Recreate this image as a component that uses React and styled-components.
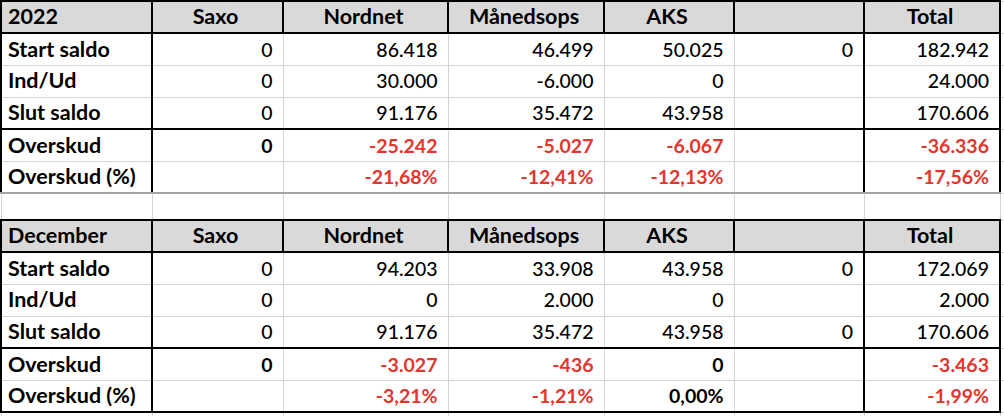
import React from "react";
import styled, { createGlobalStyle } from "styled-components";

const GlobalStyle = createGlobalStyle`
  html, body {
    margin: 0;
    padding: 0;
    background: #ffffff;
  }
  body {
    font-family: Lato, "Liberation Sans", sans-serif;
  }
`;

const Page = styled.div`
  width: 1004px;
  height: 416px;
  overflow: hidden;
  background: #ffffff;
`;

const Sheet = styled.table`
  border-collapse: collapse;
  table-layout: fixed;
  width: 1004px;
  color: #000000;
`;

const Row = styled.tr`
  height: ${(p) => p.$height || 32}px;
`;

const GRID = "1px solid #d4d4d4";
const THICK = "2px solid #000000";

const Cell = styled.td`
  padding: 0 10px 0 6px;
  border: ${GRID};
  white-space: nowrap;
  overflow: hidden;
  vertical-align: middle;
  line-height: 1;
  font-size: ${(p) => (p.$text ? "21.5px" : "19.5px")};
  text-align: ${(p) => p.$align || "right"};
  font-weight: ${(p) => (p.$bold ? 700 : 500)};
  color: ${(p) => (p.$red ? "#e3362c" : "#000000")};
  background: ${(p) => (p.$head ? "#d9d9d9" : "transparent")};
  ${(p) => p.$head && `border: ${THICK};`}
  ${(p) => p.$thickLeft && `border-left: ${THICK};`}
  ${(p) => p.$thickRight && `border-right: ${THICK};`}
  ${(p) => p.$thickTop && `border-top: ${THICK};`}
  ${(p) => p.$bottom && `border-bottom: 2px solid ${p.$bottom};`}
`;

const widths = [151, 131, 165, 156, 130, 130, 136, 5];

const tables = [
  {
    title: "2022",
    bottom: "#a3a3a3",
    rows: [
      ["Start saldo", "0", "86.418", "46.499", "50.025", "0", "182.942"],
      ["Ind/Ud", "0", "30.000", "-6.000", "0", "", "24.000"],
      ["Slut saldo", "0", "91.176", "35.472", "43.958", "", "170.606"],
      ["Overskud", "0", "-25.242", "-5.027", "-6.067", "", "-36.336"],
      ["Overskud (%)", "", "-21,68%", "-12,41%", "-12,13%", "", "-17,56%"],
    ],
  },
  {
    title: "December",
    bottom: "#000000",
    rows: [
      ["Start saldo", "0", "94.203", "33.908", "43.958", "0", "172.069"],
      ["Ind/Ud", "0", "0", "2.000", "0", "", "2.000"],
      ["Slut saldo", "0", "91.176", "35.472", "43.958", "0", "170.606"],
      ["Overskud", "0", "-3.027", "-436", "0", "", "-3.463"],
      ["Overskud (%)", "", "-3,21%", "-1,21%", "0,00%", "", "-1,99%"],
    ],
  },
];

const headers = ["Saxo", "Nordnet", "Månedsops", "AKS", "", "Total"];

const EmptyRow = ({ height }) => (
  <Row $height={height}>
    {widths.map((_, i) => (
      <Cell key={i} />
    ))}
  </Row>
);

const Block = ({ table }) => {
  const header = (
    <Row>
      <Cell $head $bold $text $align="left">
        {table.title}
      </Cell>
      {headers.map((h, i) => (
        <Cell key={i} $head $bold $text $align="center">
          {h}
        </Cell>
      ))}
      <Cell />
    </Row>
  );

  const body = table.rows.map((row, r) => {
    const summary = r >= 3;
    const last = r === table.rows.length - 1;
    return (
      <Row key={r}>
        {row.map((v, c) => (
          <Cell
            key={c}
            $text={c === 0}
            $align={c === 0 ? "left" : "right"}
            $bold={c === 0 || summary}
            $red={summary && v.startsWith("-")}
            $thickLeft={c === 0 || c === 1 || c === 6}
            $thickRight={c === 0 || c === 5 || c === 6}
            $thickTop={r === 3}
            $bottom={last ? table.bottom : null}
          >
            {v}
          </Cell>
        ))}
        <Cell />
      </Row>
    );
  });

  return (
    <>
      {header}
      {body}
    </>
  );
};

export default function App() {
  return (
    <Page>
      <GlobalStyle />
      <Sheet>
        <colgroup>
          {widths.map((w, i) => (
            <col key={i} style={{ width: w }} />
          ))}
        </colgroup>
        <tbody>
          <Block table={tables[0]} />
          <EmptyRow height={27} />
          <Block table={tables[1]} />
          <EmptyRow height={32} />
        </tbody>
      </Sheet>
    </Page>
  );
}
